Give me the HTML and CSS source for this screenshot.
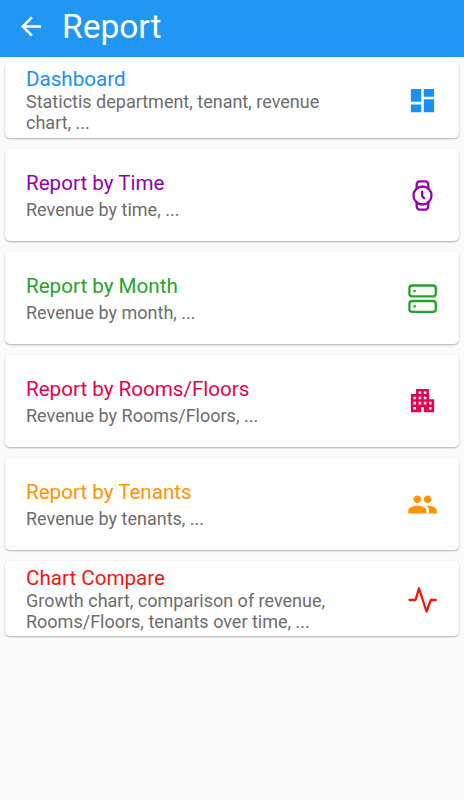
FILE: index.html
```
<!DOCTYPE html>
<html lang="en">

<head>
    <meta charset="UTF-8">
    <meta name="viewport" content="width=device-width, initial-scale=1.0">
    <title>Report</title>
    <link rel="stylesheet" href="styles.css">
</head>

<body>
    <header class="app-bar">
        <svg class="back" viewBox="0 0 24 24">
            <path fill="currentColor" d="M20 11H7.830l5.590-5.590L12 4l-8 8 8 8 1.410-1.410L7.830 13H20v-2z" />
        </svg>
        <h1>Report</h1>
    </header>

    <main class="list">
        <a class="card compact blue">
            <div class="text">
                <h2>Dashboard</h2>
                <p>Statictis department, tenant, revenue chart, ...</p>
            </div>
            <svg class="icon" viewBox="0 0 24 24">
                <path fill="currentColor" d="M3 13h8V3H3v10zm0 8h8v-6H3v6zm10 0h8V11h-8v10zm0-18v6h8V3h-8z" />
            </svg>
        </a>

        <a class="card purple">
            <div class="text">
                <h2>Report by Time</h2>
                <p>Revenue by time, ...</p>
            </div>
            <svg class="icon" viewBox="0 0 31 31">
                <g fill="none" stroke="currentColor" stroke-width="2.3" stroke-linecap="round" stroke-linejoin="round">
                    <circle cx="15.5" cy="15.5" r="9" />
                    <path d="M9.7 8.6V4.4a3 3 0 0 1 3-3h5.600a3 3 0 0 1 3 3v4.200M9.7 22.400v4.200a3 3 0 0 0 3 3h5.600a3 3 0 0 0 3-3v-4.200" />
                    <path d="M15.2 11.600v4.600l2 2" />
                </g>
            </svg>
        </a>

        <a class="card green">
            <div class="text">
                <h2>Report by Month</h2>
                <p>Revenue by month, ...</p>
            </div>
            <svg class="icon" viewBox="0 0 31 31">
                <g fill="none" stroke="currentColor" stroke-width="2.3">
                    <rect x="2.4" y="2.5" width="26.4" height="10.8" rx="2.8" />
                    <rect x="2.4" y="18" width="26.4" height="10.8" rx="2.8" />
                </g>
                <circle cx="7.6" cy="8" r="1.3" fill="currentColor" />
                <circle cx="7.6" cy="23.4" r="1.3" fill="currentColor" />
            </svg>
        </a>

        <a class="card pink">
            <div class="text">
                <h2>Report by Rooms/Floors</h2>
                <p>Revenue by Rooms/Floors, ...</p>
            </div>
            <svg class="icon raised" viewBox="0 0 24 24">
                <path fill="currentColor" d="M17 11V3H7v4H3v14h8v-4h2v4h8V11h-4zM7 19H5v-2h2v2zm0-4H5v-2h2v2zm0-4H5V9h2v2zm4 4H9v-2h2v2zm0-4H9V9h2v2zm0-4H9V5h2v2zm4 8h-2v-2h2v2zm0-4h-2V9h2v2zm0-4h-2V5h2v2zm4 12h-2v-2h2v2zm0-4h-2v-2h2v2z" />
            </svg>
        </a>

        <a class="card orange">
            <div class="text">
                <h2>Report by Tenants</h2>
                <p>Revenue by tenants, ...</p>
            </div>
            <svg class="icon" viewBox="0 0 24 24">
                <path fill="currentColor" d="M16 11c1.660 0 2.990-1.340 2.990-3S17.660 5 16 5c-1.660 0-3 1.340-3 3s1.340 3 3 3zm-8 0c1.660 0 2.990-1.340 2.990-3S9.660 5 8 5C6.340 5 5 6.340 5 8s1.340 3 3 3zm0 2c-2.330 0-7 1.170-7 3.500V19h14v-2.500c0-2.330-4.670-3.500-7-3.500zm8 0c-.29 0-.62.02-.97.05 1.160.84 1.970 1.970 1.970 3.450V19h6v-2.500c0-2.330-4.670-3.500-7-3.500z" />
            </svg>
        </a>

        <a class="card compact red">
            <div class="text">
                <h2>Chart Compare</h2>
                <p>Growth chart, comparison of revenue, Rooms/Floors, tenants over time, ...</p>
            </div>
            <svg class="icon" viewBox="0 0 31 31">
                <path fill="none" stroke="currentColor" stroke-width="2.3" stroke-linecap="round" stroke-linejoin="round" d="M2.500 17h6L12 5.300l7.500 23.200 4.300-11.500h5" />
            </svg>
        </a>
    </main>
</body>

</html>
```

FILE: styles.css
```
* {
    box-sizing: border-box;
}

body {
    margin: 0;
    font-family: Roboto, sans-serif;
    background: #fafafa;
}

h1,
h2,
p {
    margin: 0;
    font-weight: 400;
}

.app-bar {
    display: flex;
    align-items: center;
    height: 57px;
    padding: 0 16px 4px;
    background: #2196f3;
    color: #fff;
}

.back {
    width: 30px;
    height: 31px;
    margin-right: 16px;
}

.app-bar h1 {
    font-size: 33.5px;
    line-height: 40px;
}

.list {
    display: flex;
    flex-direction: column;
    gap: 11px;
    padding: 5px;
}

.card {
    display: flex;
    align-items: center;
    justify-content: space-between;
    height: 92px;
    padding: 0 21px;
    background: #fff;
    border-radius: 5px;
    box-shadow: 0 1px 2px rgba(0, 0, 0, 0.3);
}

.card.compact {
    height: 76px;
}

.card.red {
    height: 75px;
}

.text {
    width: 325px;
}

.text h2 {
    font-size: 20.6px;
    line-height: 24px;
}

.text p {
    margin-top: 4px;
    font-size: 18px;
    line-height: 21px;
    color: #6d6d6d;
}

.compact .text p {
    margin-top: 0;
}

.icon {
    width: 31px;
    height: 31px;
}

.icon.raised {
    margin-bottom: 1px;
}

.blue {
    color: #1a90f2;
}

.purple {
    color: #9400ab;
}

.green {
    color: #1fa52b;
}

.pink {
    color: #e9004f;
}

.orange {
    color: #ff9300;
}

.red {
    color: #f9150b;
}
```
